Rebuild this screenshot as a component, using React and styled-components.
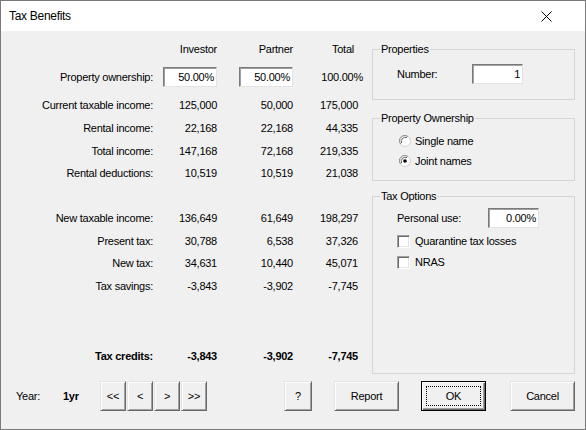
import React from "react";
import styled, { createGlobalStyle } from "styled-components";

const GlobalStyle = createGlobalStyle`
  html, body {
    margin: 0;
    padding: 0;
    background: #ffffff;
  }
  * {
    box-sizing: border-box;
  }
`;

const Window = styled.div`
  width: 586px;
  height: 430px;
  border: 1px solid #7a7a7a;
  background: #f0f0f0;
  display: flex;
  flex-direction: column;
  font-family: "Liberation Sans", Arial, sans-serif;
  font-size: 11px;
  letter-spacing: -0.25px;
  color: #000;
  overflow: hidden;
`;

const TitleBar = styled.div`
  height: 30px;
  background: #ffffff;
  display: flex;
  align-items: center;
  padding-left: 8px;
  font-size: 12px;
  letter-spacing: -0.3px;
`;

const Title = styled.span`
  flex: 1;
`;

const CloseButton = styled.div`
  width: 46px;
  height: 30px;
  margin-right: 16px;
  display: flex;
  align-items: center;
  justify-content: center;
`;

const TopSection = styled.div`
  height: 343px;
  display: flex;
`;

const LeftPanel = styled.div`
  width: 371px;
  padding-top: 7px;
  display: flex;
  flex-direction: column;
`;

const Row = styled.div`
  display: grid;
  grid-template-columns: 152px 64px 76px 65px;
  align-items: center;
  height: ${(p) => p.$h || 22.7}px;
  margin-top: ${(p) => p.$gap || 0}px;
  font-weight: ${(p) => (p.$bold ? "bold" : "normal")};
  white-space: nowrap;
`;

const Label = styled.div`
  text-align: right;
`;

const Num = styled.div`
  text-align: right;
  padding-right: ${(p) => p.$pr || 0}px;
  margin-right: ${(p) => p.$mr || 0}px;
`;

const EditBox = styled.div`
  width: ${(p) => p.$w}px;
  height: 20px;
  background: #ffffff;
  border-style: solid;
  border-width: 1px;
  border-color: #7a7a7a #e3e3e3 #e3e3e3 #7a7a7a;
  box-shadow: inset 1px 1px 0 #a0a0a0;
  text-align: right;
  padding-right: 2px;
  line-height: 18px;
  justify-self: end;
`;

const RightPanel = styled.div`
  width: 203px;
  padding-top: 11.5px;
  display: flex;
  flex-direction: column;
`;

const GroupBox = styled.fieldset`
  margin: ${(p) => p.$mt || 0}px 0 0 0;
  border: 1px solid #d5d5d5;
  padding: ${(p) => p.$pt}px 0 ${(p) => p.$pb}px 7px;
  flex: ${(p) => (p.$grow ? 1 : "none")};
  min-width: 0;
`;

const Legend = styled.legend`
  padding: 0 1px;
  line-height: 13px;
`;

const GroupBody = styled.div`
  padding-left: 17px;
`;

const FieldRow = styled.div`
  display: flex;
  align-items: center;
  height: 20px;
`;

const FieldLabel = styled.div`
  width: ${(p) => p.$w}px;
`;

const OptionRow = styled.div`
  display: flex;
  align-items: center;
  gap: 4px;
  height: ${(p) => p.$h || 20}px;
  margin-top: ${(p) => p.$gap || 0}px;
`;

const CheckBox = styled.div`
  width: 13px;
  height: 13px;
  background: #ffffff;
  border-style: solid;
  border-width: 1px;
  border-color: #a0a0a0 #ffffff #ffffff #a0a0a0;
  box-shadow: inset 1px 1px 0 #696969, inset -1px -1px 0 #e3e3e3;
  margin-right: 1px;
`;

const Footer = styled.div`
  flex: 1;
  display: flex;
  align-items: flex-start;
  padding: 7px 10px 0 15px;
`;

const YearLabel = styled.div`
  width: 47px;
  height: 30px;
  line-height: 30px;
`;

const YearValue = styled.div`
  width: 37px;
  height: 30px;
  line-height: 30px;
  font-weight: bold;
`;

const NavGroup = styled.div`
  display: flex;
  gap: 1px;
`;

const Button = styled.div`
  width: ${(p) => p.$w || 65}px;
  height: 30px;
  margin-left: ${(p) => p.$ml || 0}px;
  background: #f0f0f0;
  display: flex;
  align-items: center;
  justify-content: center;
  border-style: solid;
  border-width: 1px;
  border-color: ${(p) =>
    p.$default ? "#000000" : "#e3e3e3 #696969 #696969 #e3e3e3"};
  box-shadow: ${(p) =>
    p.$default
      ? "inset 1px 1px 0 #ffffff, inset -1px -1px 0 #696969, inset -2px -2px 0 #a0a0a0"
      : "inset 1px 1px 0 #ffffff, inset -1px -1px 0 #a0a0a0"};
  position: relative;
`;

const FocusRect = styled.div`
  position: absolute;
  inset: 4px;
  border: 1px dotted #000;
`;

const Radio = ({ checked }) => (
  <svg width="12" height="12" viewBox="0 0 12 12" style={{ marginLeft: 2 }}>
    <circle cx="6" cy="6" r="5.5" fill="#ffffff" stroke="#d0d0d0" />
    <path d="M1.7 9.0 A5.2 5.2 0 0 1 9.0 1.7" fill="none" stroke="#8a8a8a" />
    <path d="M2.6 8.0 A4.1 4.1 0 0 1 8.0 2.6" fill="none" stroke="#5a5a5a" />
    {checked && <circle cx="6" cy="6" r="1.8" fill="#000000" />}
  </svg>
);

const upper = [
  ["Current taxable income:", "125,000", "50,000", "175,000"],
  ["Rental income:", "22,168", "22,168", "44,335"],
  ["Total income:", "147,168", "72,168", "219,335"],
  ["Rental deductions:", "10,519", "10,519", "21,038"],
];

const lower = [
  ["New taxable income:", "136,649", "61,649", "198,297"],
  ["Present tax:", "30,788", "6,538", "37,326"],
  ["New tax:", "34,631", "10,440", "45,071"],
  ["Tax savings:", "-3,843", "-3,902", "-7,745"],
];

const DataRow = ({ row, gap, bold }) => (
  <Row $gap={gap} $bold={bold}>
    <Label>{row[0]}</Label>
    <Num>{row[1]}</Num>
    <Num>{row[2]}</Num>
    <Num>{row[3]}</Num>
  </Row>
);

const App = () => {
  return (
    <>
      <GlobalStyle />
      <Window>
        <TitleBar>
          <Title>Tax Benefits</Title>
          <CloseButton>
            <svg width="11" height="11" viewBox="0 0 11 11">
              <path d="M0.5 0.5 L10.5 10.5 M10.5 0.5 L0.5 10.5" stroke="#000" strokeWidth="1" />
            </svg>
          </CloseButton>
        </TitleBar>

        <TopSection>
          <LeftPanel>
            <Row $h={22}>
              <span />
              <Num>Investor</Num>
              <Num>Partner</Num>
              <Num $pr={4}>Total</Num>
            </Row>
            <Row $h={34}>
              <Label>Property ownership:</Label>
              <EditBox $w={54}>50.00%</EditBox>
              <EditBox $w={54}>50.00%</EditBox>
              <Num $mr={-5}>100.00%</Num>
            </Row>
            {upper.map((r) => (
              <DataRow key={r[0]} row={r} gap={0} />
            ))}
            {lower.map((r, i) => (
              <DataRow key={r[0]} row={r} gap={i === 0 ? 22 : 0} />
            ))}
            <DataRow row={["Tax credits:", "-3,843", "-3,902", "-7,745"]} gap={47.5} bold />
          </LeftPanel>

          <RightPanel>
            <GroupBox $pt={8.5} $pb={15}>
              <Legend>Properties</Legend>
              <GroupBody>
                <FieldRow>
                  <FieldLabel $w={75}>Number:</FieldLabel>
                  <EditBox $w={51}>1</EditBox>
                </FieldRow>
              </GroupBody>
            </GroupBox>

            <GroupBox $mt={12} $pt={6} $pb={9}>
              <Legend>Property Ownership</Legend>
              <GroupBody>
                <OptionRow>
                  <Radio />
                  Single name
                </OptionRow>
                <OptionRow>
                  <Radio checked />
                  Joint names
                </OptionRow>
              </GroupBody>
            </GroupBox>

            <GroupBox $mt={9} $pt={5} $pb={0} $grow>
              <Legend>Tax Options</Legend>
              <GroupBody>
                <FieldRow>
                  <FieldLabel $w={91}>Personal use:</FieldLabel>
                  <EditBox $w={51}>0.00%</EditBox>
                </FieldRow>
                <OptionRow $h={21} $gap={2.5}>
                  <CheckBox />
                  Quarantine tax losses
                </OptionRow>
                <OptionRow $h={21}>
                  <CheckBox />
                  NRAS
                </OptionRow>
              </GroupBody>
            </GroupBox>
          </RightPanel>
        </TopSection>

        <Footer>
          <YearLabel>Year:</YearLabel>
          <YearValue>1yr</YearValue>
          <NavGroup>
            <Button $w={26}>&lt;&lt;</Button>
            <Button $w={26}>&lt;</Button>
            <Button $w={26}>&gt;</Button>
            <Button $w={26}>&gt;&gt;</Button>
          </NavGroup>
          <Button $w={28} style={{ marginLeft: "auto" }}>?</Button>
          <Button $ml={22}>Report</Button>
          <Button $ml={22} $default>
            <FocusRect />
            OK
          </Button>
          <Button $ml={24}>Cancel</Button>
        </Footer>
      </Window>
    </>
  );
};

export default App;
